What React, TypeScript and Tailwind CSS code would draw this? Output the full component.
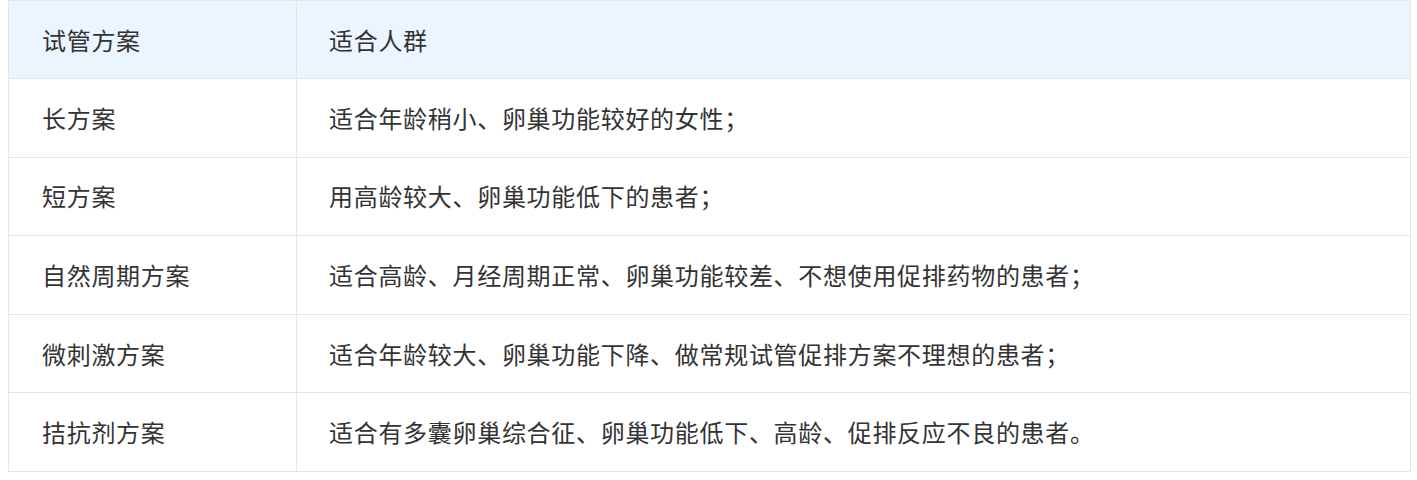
const rows = [
  ["长方案", "适合年龄稍小、卵巢功能较好的女性；"],
  ["短方案", "用高龄较大、卵巢功能低下的患者；"],
  ["自然周期方案", "适合高龄、月经周期正常、卵巢功能较差、不想使用促排药物的患者；"],
  ["微刺激方案", "适合年龄较大、卵巢功能下降、做常规试管促排方案不理想的患者；"],
  ["拮抗剂方案", "适合有多囊卵巢综合征、卵巢功能低下、高龄、促排反应不良的患者。"],
];

export default function App() {
  return (
    <div className="bg-white w-[1417px] h-[480px] pl-2 font-['Noto_Sans_CJK_SC','Noto_Sans',sans-serif] text-[#333] text-[24px] tracking-[0.7px]">
      <div className="w-[1403px] border border-[#e5e5e5]">
        <div className="flex h-[77px] bg-[#eaf5ff]">
          <div className="w-[288px] border-r border-[#e5e5e5] flex items-center pl-[33px]">试管方案</div>
          <div className="flex-1 flex items-center pl-[32px]">适合人群</div>
        </div>
        {rows.map(([a, b]) => (
          <div key={a} className="flex h-[78.6px] border-t border-[#e5e5e5]">
            <div className="w-[288px] border-r border-[#e5e5e5] flex items-center pl-[33px]">{a}</div>
            <div className="flex-1 flex items-center pl-[32px]">{b}</div>
          </div>
        ))}
      </div>
    </div>
  );
}
